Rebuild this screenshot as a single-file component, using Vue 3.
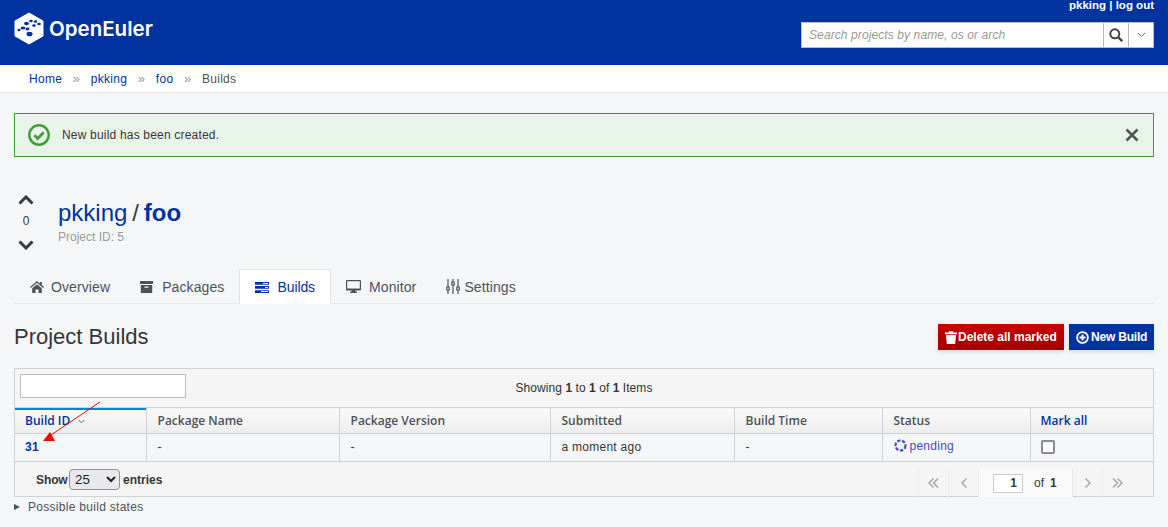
<script setup>
const crumbs = ['Home', 'pkking', 'foo']
const columns = [
  { label: 'Build ID', width: 131, sorted: true },
  { label: 'Package Name', width: 193 },
  { label: 'Package Version', width: 211 },
  { label: 'Submitted', width: 184 },
  { label: 'Build Time', width: 148 },
  { label: 'Status', width: 148 },
  { label: 'Mark all', width: 123, link: true }
]
</script>

<template>
  <div class="page">
    <header class="topbar">
      <div class="brand">
        <svg class="logo" width="30" height="33" viewBox="0 0 30 33">
          <path d="M15 1 29 9V24L15 32 1 24V9Z" fill="#fff" stroke="#fff" stroke-linejoin="round" />
          <g fill="#0033a0">
            <ellipse cx="12.500" cy="11.500" rx="2.500" ry="1.700" />
            <ellipse cx="17" cy="9" rx="1.800" ry="1.300" />
            <ellipse cx="21.500" cy="9.500" rx="1.800" ry="1.300" />
            <ellipse cx="25" cy="12" rx="1.800" ry="1.300" />
            <ellipse cx="20" cy="13.500" rx="1.800" ry="1.300" />
            <ellipse cx="9" cy="16" rx="2.400" ry="1.600" />
            <ellipse cx="13.500" cy="17" rx="2" ry="1.400" />
            <ellipse cx="5" cy="18" rx="1.500" ry="1.200" />
            <ellipse cx="15.500" cy="22" rx="3" ry="2.300" />
          </g>
        </svg>
        <span class="wordmark">OpenEuler</span>
      </div>
      <div class="top-right">
        <div class="userline">pkking | log out</div>
        <div class="search">
          <span class="search-input">Search projects by name, os or arch</span>
          <span class="search-btn">
            <svg width="14" height="14" viewBox="0 0 14 14" fill="none" stroke="#444" stroke-width="2">
              <circle cx="5.800" cy="5.800" r="4.500" />
              <path d="M9 9l4.200 4.200" stroke-width="2.400" />
            </svg>
          </span>
          <span class="search-drop">
            <svg width="9" height="6" viewBox="0 0 9 6" fill="none" stroke="#666" stroke-width="1">
              <path d="M1 1l3.500 3.500L8 1" />
            </svg>
          </span>
        </div>
      </div>
    </header>

    <nav class="crumbs">
      <template v-for="c in crumbs" :key="c">
        <a class="crumb">{{ c }}</a>
        <span class="sep">»</span>
      </template>
      <span class="crumb-current">Builds</span>
    </nav>

    <main class="content">
      <div class="alert">
        <svg width="24" height="24" viewBox="0 0 24 24" fill="none">
          <circle cx="12" cy="12" r="9.700" stroke="#3f9c35" stroke-width="2.400" />
          <path d="M7.500 12.200l3.200 3.200 5.800-5.800" stroke="#3f9c35" stroke-width="2.800" />
        </svg>
        <span class="alert-text">New build has been created.</span>
        <svg class="alert-close" width="14" height="14" viewBox="0 0 14 14" stroke="#555" stroke-width="2.600" fill="none">
          <path d="M1.500 1.500l11 11M12.500 1.500l-11 11" />
        </svg>
      </div>

      <section class="project">
        <div class="votes">
          <svg width="16" height="10" viewBox="0 0 16 10" fill="none" stroke="#3a3a3a" stroke-width="3">
            <path d="M1.500 8.500L8 2l6.500 6.500" />
          </svg>
          <span class="vote-count">0</span>
          <svg width="16" height="10" viewBox="0 0 16 10" fill="none" stroke="#3a3a3a" stroke-width="3">
            <path d="M1.500 1.500L8 8l6.500-6.500" />
          </svg>
        </div>
        <div>
          <h1 class="project-title"><a class="owner">pkking</a> / <a class="name">foo</a></h1>
          <div class="project-id">Project ID: 5</div>
        </div>
      </section>

      <ul class="tabs">
        <li class="tab">
          <svg class="tab-icon" width="14" height="12" viewBox="0 0 14 12" fill="#4d5258"><path d="M7 0 0 6l.800.900L7 1.800l6.200 5.100.800-.900-2.200-1.900V1h-1.800v1.600zM2.200 7.200V12h3.300V8.500h3V12h3.300V7.200L7 3.200z" /></svg>
          Overview
        </li>
        <li class="tab">
          <svg class="tab-icon icon-wide" width="13" height="12" viewBox="0 0 13 12" fill="#4d5258"><path d="M0 0h13v3H0zM.800 4h11.400v8H.800zM4.500 5.500v1.300h4V5.500z" fill-rule="evenodd" /></svg>
          Packages
        </li>
        <li class="tab active">
          <svg class="tab-icon icon-wide" width="14" height="11" viewBox="0 0 14 11" fill="#0033a0"><path d="M0 0h14v2.800H0zM0 4h14v2.800H0zM0 8.200h14V11H0z" /><path d="M8 .900h5v1H8zM10 4.900h3v1h-3zM6 9.100h7v1H6z" fill="#fff" /></svg>
          Builds
        </li>
        <li class="tab">
          <svg class="tab-icon icon-wide" width="15" height="13" viewBox="0 0 15 13" fill="#4d5258"><path d="M1 0h13a1 1 0 0 1 1 1v8.500a1 1 0 0 1-1 1H9.500v1.300H11V13H4v-1.200h1.500v-1.300H1a1 1 0 0 1-1-1V1a1 1 0 0 1 1-1zm.200 1.200v7.200h12.600V1.200z" fill-rule="evenodd" /></svg>
          Monitor
        </li>
        <li class="tab">
          <svg class="tab-icon icon-narrow" width="14" height="15" viewBox="0 0 14 15" fill="#4d5258" stroke="#4d5258"><path d="M2 0v15M7 0v15M12 0v15" stroke-width="1.200" /><path d="M.800 8h2.400v3H.800zM5.800 3h2.400v3H5.800zM10.800 8h2.400v3h-2.400z" fill="#f4f6f8" stroke-width="1.200" /></svg>
          Settings
        </li>
      </ul>

      <div class="section-head">
        <h2 class="section-title">Project Builds</h2>
        <div class="actions">
          <button class="btn btn-danger">
            <svg width="12" height="13" viewBox="0 0 12 13" fill="#fff"><path d="M0 1.600h12V3.200H0zM3.800.200h4.400v1.800H3.800zM1 4h10l-.800 9H1.800z" /></svg>
            Delete all marked
          </button>
          <button class="btn btn-primary">
            <svg width="13" height="13" viewBox="0 0 13 13" fill="none" stroke="#fff"><circle cx="6.500" cy="6.500" r="5.400" stroke-width="1.800" /><path d="M3.500 6.500h6M6.500 3.500v6" stroke-width="2" /></svg>
            New Build
          </button>
        </div>
      </div>

      <div class="table-wrap">
        <div class="toolbar">
          <input class="filter" type="text" aria-label="Filter" />
          <div class="showing">Showing <b>1</b> to <b>1</b> of <b>1</b> Items</div>
        </div>
        <table class="grid">
          <colgroup>
            <col v-for="c in columns" :key="c.label" :style="{ width: c.width + 'px' }" />
          </colgroup>
          <thead>
            <tr>
              <th v-for="c in columns" :key="c.label" :class="{ sorted: c.sorted, link: c.link }">
                {{ c.label }}
                <svg v-if="c.sorted" class="sort" width="7" height="5" viewBox="0 0 7 5" fill="none" stroke="#4a6fb0"><path d="M.500.800l3 3 3-3" /></svg>
              </th>
            </tr>
          </thead>
          <tbody>
            <tr>
              <td><a class="build-id">31</a></td>
              <td><a class="cell-link">-</a></td>
              <td><a class="cell-link">-</a></td>
              <td>a moment ago</td>
              <td>-</td>
              <td class="status-cell">
                <span class="status">
                  <svg class="status-icon" width="13" height="13" viewBox="0 0 13 13" fill="none" stroke="#4f46c8" stroke-width="2.200" stroke-dasharray="3.400 1.500"><circle cx="6.500" cy="6.500" r="5" /></svg>
                  pending
                </span>
              </td>
              <td class="check-cell"><span class="check"></span></td>
            </tr>
          </tbody>
        </table>
        <div class="table-foot">
          <div class="entries">
            <span class="show-label">Show</span>
            <select class="page-size" aria-label="Entries"><option>25</option></select>
            entries
          </div>
          <div class="pager">
            <span class="pg"><svg width="11" height="10" viewBox="0 0 11 10" fill="none" stroke="#9a9ea6" stroke-width="1.300"><path d="M5.500.500 1 5l4.500 4.500M10 .500 5.500 5l4.500 4.500" /></svg></span>
            <span class="pg"><svg width="6" height="10" viewBox="0 0 6 10" fill="none" stroke="#9a9ea6" stroke-width="1.300"><path d="M5.500.500 1 5l4.500 4.500" /></svg></span>
            <span class="pg-current"><span class="pg-input">1</span> <span class="pg-of">of</span> <b>1</b></span>
            <span class="pg"><svg width="6" height="10" viewBox="0 0 6 10" fill="none" stroke="#9a9ea6" stroke-width="1.300"><path d="M.500.500 5 5 .500 9.500" /></svg></span>
            <span class="pg"><svg width="11" height="10" viewBox="0 0 11 10" fill="none" stroke="#9a9ea6" stroke-width="1.300"><path d="M1 .500 5.500 5 1 9.500M5.500.500 10 5l-4.500 4.500" /></svg></span>
          </div>
        </div>
      </div>

      <div class="states"><span class="caret"></span>Possible build states</div>
    </main>

    <svg class="annotation" width="110" height="50" viewBox="0 398 110 50">
      <path d="M100 402 51 435" stroke="#f00" stroke-width="1" fill="none" />
      <path d="M43 441 50 432 55 441z" fill="#f00" />
    </svg>
  </div>
</template>

<style>
html, body { margin: 0; background: #f4f6f8; }
</style>

<style scoped>
.page {
  position: relative;
  width: 1168px;
  height: 527px;
  overflow: hidden;
  background: #f4f6f8;
  color: #3a3a3a;
  font-family: "Liberation Sans", Arial, sans-serif;
  font-size: 12px;
}
a { color: #0033a0; text-decoration: none; }

.topbar {
  height: 65px;
  background: #0033a0;
  display: flex;
  justify-content: space-between;
  padding: 0 14px;
  box-sizing: border-box;
}
.brand { display: flex; align-items: center; height: 56px; gap: 5px; }
.logo { display: block; }
.wordmark {
  color: #fff;
  font-family: Inter, "Noto Sans", sans-serif;
  font-weight: 600;
  font-size: 20.500px;
}
.top-right { display: flex; flex-direction: column; align-items: flex-end; }
.userline {
  color: #fff;
  font-weight: bold;
  font-size: 11.500px;
  line-height: 10px;
  height: 22px;
}
.search {
  display: flex;
  height: 26px;
  width: 353px;
  box-sizing: border-box;
  border: 1px solid #bbb;
  background: #fff;
}
.search-input {
  flex: 1;
  padding-left: 7px;
  line-height: 24px;
  color: #999;
  font-style: italic;
  font-size: 12px;
  letter-spacing: .1px;
}
.search-btn, .search-drop {
  display: flex;
  align-items: center;
  justify-content: center;
  border-left: 1px solid #bbb;
  width: 24px;
}

.crumbs {
  height: 28px;
  box-sizing: border-box;
  background: #fff;
  border-bottom: 1px solid #e4e4e4;
  display: flex;
  align-items: center;
  padding-left: 29px;
  letter-spacing: .3px;
}
.sep { color: #999; margin: 0 10.500px; font-size: 13px; }
.crumb-current { color: #4d5258; }

.content { padding: 20px 14px 0; }

.alert {
  height: 44px;
  box-sizing: border-box;
  border: 1px solid #3f9c35;
  background: #e9f4e9;
  display: flex;
  align-items: center;
  padding-left: 12px;
}
.alert-text { margin-left: 11px; color: #363636; letter-spacing: .19px; }
.alert-close { margin-left: auto; margin-right: 14px; }

.project {
  margin-top: 36px;
  display: flex;
  align-items: flex-start;
}
.votes {
  width: 24px;
  margin-right: 20px;
  display: flex;
  flex-direction: column;
  align-items: center;
  padding-top: 2px;
}
.vote-count { margin: 9px 0 12px; line-height: 14px; font-size: 12px; }
.project-title {
  margin: 6px 0 0;
  font-size: 24px;
  line-height: 27px;
  font-weight: normal;
  color: #3a3a3a;
  word-spacing: -1.800px;
}
.name { font-weight: bold; }
.project-id { color: #9c9c9c; line-height: 14px; margin-top: 4px; }

.tabs {
  list-style: none;
  display: flex;
  margin: 19px 0 0;
  padding: 0;
  height: 34px;
  border-bottom: 1px solid #e6e8ea;
}
.tab {
  display: flex;
  align-items: center;
  padding: 0 15px 0 16px;
  font-size: 14px;
  letter-spacing: .1px;
  color: #4d5258;
  height: 35px;
  box-sizing: border-box;
}
.tab + .tab { padding-left: 15px; }
.tab-icon { margin-right: 7px; }
.icon-wide { margin-right: 8px; }
.tab:nth-child(2) .icon-wide { margin-right: 9px; }
.icon-narrow { margin-right: 4px; }
.active {
  background: #fff;
  color: #0033a0;
  border: 1px solid #e1e3e5;
  border-bottom: 0;
  letter-spacing: -.1px;
}

.section-head {
  display: flex;
  justify-content: space-between;
  align-items: center;
  margin-top: 20px;
  height: 26px;
}
.section-title { margin: 0; font-size: 22px; font-weight: normal; color: #363636; }
.actions { display: flex; gap: 5px; }
.btn {
  height: 26px;
  border: 0;
  color: #fff;
  font: bold 12px "Liberation Sans", Arial, sans-serif;
  display: flex;
  align-items: center;
  gap: 1px;
  box-shadow: 0 2px 4px rgba(0, 0, 0, .12);
}
.btn-danger {
  width: 126px;
  padding: 0 0 0 7px;
  background: linear-gradient(#cc0000, #a30000);
}
.btn-primary {
  width: 85px;
  padding: 0 0 0 7px;
  gap: 2px;
  background: #0033a0;
  letter-spacing: -.2px;
}

.table-wrap {
  margin-top: 18px;
  border: 1px solid #d1d1d1;
  background: #f5f5f5;
  height: 129px;
  box-sizing: border-box;
  width: 1140px;
}
.toolbar {
  position: relative;
  height: 38px;
  display: flex;
  align-items: center;
  justify-content: center;
  box-sizing: border-box;
}
.filter {
  position: absolute;
  left: 5px;
  top: 5px;
  width: 166px;
  height: 24px;
  box-sizing: border-box;
  border: 1px solid #bbb;
  background: #fff;
  padding: 0;
}
.showing { color: #333; letter-spacing: .06px; }
.grid {
  table-layout: fixed;
  border-collapse: collapse;
  width: 1138px;
  font-size: 12px;
}
.grid th {
  height: 26px;
  padding: 0 10px;
  box-sizing: border-box;
  text-align: left;
  font-family: "Open Sans", "Noto Sans", sans-serif;
  font-weight: 600;
  color: #4d5258;
  background: linear-gradient(#fafafa, #ededed);
  border: 1px solid #d1d1d1;
  border-left: 0;
  white-space: nowrap;
}
.grid th:last-child { border-right: 0; }
.grid th.sorted { color: #0033a0; box-shadow: inset 0 2px 0 #0088ce; }
.grid th.link { color: #0033a0; }
.sort { margin-left: 5px; vertical-align: middle; }
.grid td {
  height: 28px;
  padding: 0 10px 2px;
  box-sizing: border-box;
  background: #f4f6f8;
  border: 1px solid #d1d1d1;
  border-top: 0;
  border-left: 0;
  color: #363636;
  letter-spacing: .26px;
}
.grid th:nth-child(n+2):nth-child(-n+6),
.grid td:nth-child(n+2):nth-child(-n+6) { padding-left: 11px; }
.grid td:last-child { border-right: 0; }
.build-id { font-weight: bold; }
.grid td.status-cell { padding-bottom: 1px; }
.status {
  display: inline-flex;
  align-items: center;
  gap: 3px;
  color: #4f46c8;
}
.status-icon { margin-top: -1px; }
.check {
  display: block;
  width: 14px;
  height: 14px;
  box-sizing: border-box;
  border: 2px solid #8a8a96;
  border-radius: 2px;
  background: #fff;
}
.table-foot {
  height: 35px;
  display: flex;
  justify-content: space-between;
  align-items: flex-start;
  padding: 7px 0 0 21px;
  box-sizing: border-box;
}
.entries {
  display: flex;
  align-items: center;
  gap: 3px;
  font-weight: bold;
  color: #363636;
  height: 21px;
}
.show-label { margin-right: -1.500px; letter-spacing: -.1px; }
.page-size {
  width: 51px;
  height: 21px;
  box-sizing: border-box;
  border: 1px solid #8f8f9d;
  border-radius: 4px;
  background: #e9e9ed;
  font: 13.330px "Liberation Sans", Arial, sans-serif;
  color: #222;
  padding-left: 1px;
}
.pager {
  display: flex;
  height: 28px;
  margin-right: 21px;
}
.pg {
  width: 30px;
  display: flex;
  align-items: center;
  justify-content: center;
  border-left: 1px solid #ececec;
  box-sizing: border-box;
}
.pg-current {
  width: 94px;
  background: #fafafa;
  border-left: 1px solid #ececec;
  display: flex;
  align-items: center;
  padding-left: 14px;
  box-sizing: border-box;
  color: #363636;
}
.pg-input {
  display: block;
  width: 30px;
  height: 19px;
  box-sizing: border-box;
  border: 1px solid #ccc;
  background: #fff;
  text-align: right;
  padding-right: 5px;
  font-weight: bold;
  line-height: 17px;
}
.pg-of { margin: 0 6px 0 11px; }
.states {
  margin-top: 3px;
  display: flex;
  align-items: center;
  color: #4d5258;
  line-height: 14px;
  letter-spacing: .29px;
}
.caret {
  width: 0;
  height: 0;
  margin-right: 8px;
  border-left: 6px solid #4d5258;
  border-top: 3px solid transparent;
  border-bottom: 3px solid transparent;
}
.annotation {
  position: absolute;
  left: 0;
  top: 398px;
}
</style>
